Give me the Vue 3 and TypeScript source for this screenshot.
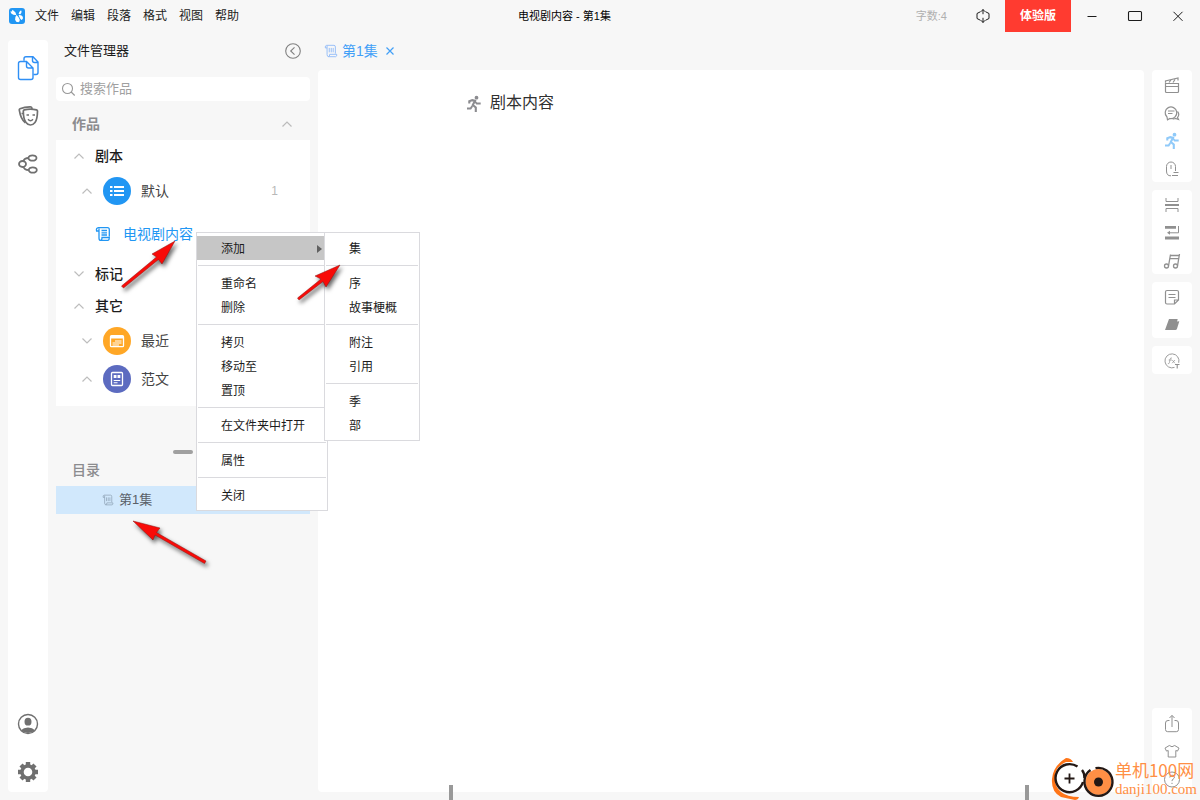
<script setup lang="ts">
import { h, ref } from 'vue'

interface Shape {
  d: string
  fill?: boolean
  w?: number
}

const icons: Record<string, Shape[]> = {
  clapper: [
    { d: 'M7.500 13.500h13v8q0 1-1 1h-11q-1 0-1-1zM7.500 16.500h13', w: 1.2 },
    { d: 'M7.500 12.800V11l12.500-3v2.500M11 12.500l2-2.500M15 12.500l2-3', w: 1.2 },
  ],
  chat: [
    { d: 'M9 19a5.800 5.800 0 1 1 3 1.500l-2.500 1.300z', w: 1.2 },
    { d: 'M10 13h6.500M10 15.500h4.500' },
    { d: 'M19.500 13.500q2.500 3 0 6l1 2-3-1q-1.600.6-3 .2', w: 1.2 },
  ],
  runner: [
    { d: 'M16.500 6.800a1.900 1.900 0 1 1 0 3.800a1.900 1.900 0 0 1 0-3.800z', fill: true },
    { d: 'M9.300 14.500v-2.200l3-1.200 2.700.6-2.200 4.300 3 2.500v4.500', w: 2.1 },
    { d: 'M14.700 12l2 2.500h4', w: 1.800 },
    { d: 'M12.300 17l-1.700 2.500H7', w: 2 },
  ],
  speaker: [
    { d: 'M17.500 17v-4.500a4.500 4.500 0 0 0-9 0V17q0 5 4.500 4.800M13 11v4' },
    { d: 'M15.500 18.500h5M14 21.500h6' },
  ],
  split: [
    { d: 'M8 8v3.500h12V8M8 22v-3.500h12V22' },
    { d: 'M7 14h14v2H7z', fill: true },
  ],
  wrap: [
    { d: 'M7 8h11v2.800H7zM7 18.500h14v3H7zM9 14.800l3-2v4z', fill: true },
    { d: 'M20.500 8v6.800H11' },
  ],
  music: [
    { d: 'M10.500 20a2 2 0 1 1-4 0a2 2 0 0 1 4 0zM19.500 20a2 2 0 1 1-4 0a2 2 0 0 1 4 0z', w: 1.3 },
    { d: 'M10.500 20l2-11.500M19.500 20l2-12M12.500 9.500h8.500M12 12.700h8.700', w: 1.3 },
  ],
  note: [
    { d: 'M9 8.500h10q1.500 0 1.500 1.500v8l-4 4H9q-1.500 0-1.500-1.500V10q0-1.500 1.500-1.500zM20.500 18h-4v4', w: 1.2 },
    { d: 'M10.500 12.500h7M10.500 15.500h7' },
  ],
  eraser: [{ d: 'M11 9h8.700l-.6 2.600 2.200-.4-2.300 7.500q-.4 1.300-1.700 1.300H7z', fill: true }],
  formula: [
    { d: 'M20.700 16.800a7 7 0 1 0-4.200 4.600', w: 0.9 },
    { d: 'M14 12q-1.700-.5-2 1.400l-.6 3.400q-.3 1.200-1.500.8M10.700 14h3.200M14.300 14l2.500 3.200M17 14l-2.900 3.200', w: 0.7 },
    { d: 'M17 18.500h4.500M19.200 18.500v4', w: 1.1 },
  ],
  share: [{ d: 'M11.500 12.500H10q-2.500 0-2.500 2.500v6.500q0 2.200 2.200 2.200h8.600q2.200 0 2.200-2.200V15q0-2.500-2.500-2.500h-1.500M14 19V7.800M11.500 10L14 7.300l2.500 2.700' }],
  shirt: [{ d: 'M11.300 9.500q2.700 2.500 5.400 0l4.300 2.600-1.500 3-1.700-.6v6.500h-7.600v-6.500l-1.700.6-1.500-3z' }],
  help: [
    { d: 'M21.500 15.500a7.500 7.500 0 1 1-15 0a7.500 7.500 0 0 1 15 0z' },
    { d: 'M11.800 13.500q0-2.300 2.300-2.300t2.300 2q0 1-1.200 1.800t-1.200 2.100M14 18.800v1.200' },
  ],
  files: [
    { d: 'M25.500 26.500h2.500q2 0 2-2V14l-5-5.200h-7q-2 0-2 2v2M24.500 9v3.500q0 2 2 2H30', w: 1.4 },
    { d: 'M18.500 13.500h-6q-2 0-2 2v14q0 2 2 2h10.500q2 0 2-2v-9.500zM18.500 13.500v4.500q0 2 2 2H25', w: 1.4 },
  ],
  masks: [
    { d: 'M15.300 15q0-1 1-1.200 6-1.300 12.200 0 1 .2 1 1.200-.1 8.500-2.500 11.500-2 2.500-4.600 2.500T18 26.500q-2.700-3.500-2.700-11.500z', w: 1.7 },
    { d: 'M24 13q0-2.300-2-2.200-5.500.2-10 2-1 .4-.7 1.400 1.500 9.300 6 12.600', w: 1.7 },
    { d: 'M18.500 19h2.500M24.500 19H27M20 23.300q2.500 2.800 5 0M13.500 17.500h2', w: 1.4 },
  ],
  nodes: [
    { d: 'M18 20a3.500 3 0 1 1-7 0a3.500 3 0 0 1 7 0zM28.500 14a4 2.700 0 1 1-8 0a4 2.700 0 0 1 8 0zM28.800 26a4 2.700 0 1 1-8 0a4 2.700 0 0 1 8 0z', w: 1.8 },
    { d: 'M15.500 17q1-3 5-3M15.500 23q1 3 5 3', w: 1.8 },
  ],
  user: [
    { d: 'M29.500 20a9.500 9.500 0 1 1-19 0a9.500 9.500 0 0 1 19 0z', w: 1.4 },
    { d: 'M20 13.800a3.500 3.900 0 1 1 0 7.800a3.500 3.900 0 0 1 0-7.800zM13 26.200q2.500-2.700 7-2.700t7 2.700q-3 2.900-7 2.900t-7-2.900z', fill: true },
  ],
  gear: [
    { d: 'M26 20a6 6 0 1 1-12 0a6 6 0 0 1 12 0z', w: 3.4 },
    { d: 'M20 10v3.500M20 26.500V30M10 20h3.500M26.500 20H30M13 13l2.300 2.300M24.700 24.700L27 27M27 13l-2.300 2.300M15.300 24.700L13 27', w: 4.4 },
  ],
  scroll: [
    { d: 'M3.500 4.500H1.500q-.6-2.700 1.500-3h8.500q1.500 0 1.500 2v7.500M3.500 2v10q0 2.500 2 2.500h8q1.500-.5 1-2.700H6.500q0 2.700-1.500 2.700' },
    { d: 'M6 4.500v5M8.300 4.500v5M10.500 4.500v5' },
  ],
  scrollText: [
    { d: 'M4 5H1.600q-.8-3 1.900-3.400h9q1.800 0 1.800 2v7M4 2.500v9.700q0 2.200 2 2.200h7q1.500-.5 1.300-2.900H7q0 2.900-1.500 2.900', w: 1.3 },
    { d: 'M6.500 4.500H12M6.500 6.800H12M6.500 9H12', w: 1.3 },
  ],
  up: [{ d: 'M3.500 10.500L8 6l4.500 4.500', w: 1.2 }],
  down: [{ d: 'M3.500 5.500L8 10l4.500-4.500', w: 1.2 }],
  collapse: [{ d: 'M15.300 8a7.300 7.300 0 1 1-14.600 0a7.300 7.300 0 0 1 14.600 0zM9.500 4.300L5.700 8l3.800 3.700', w: 1.1 }],
  search: [{ d: 'M12.500 7.500a5 5 0 1 1-10 0a5 5 0 0 1 10 0zM11.200 11l3.500 3.500', w: 1.1 }],
  cross: [{ d: 'M4.500 4.500l7 7M11.500 4.500l-7 7', w: 1.2 }],
  fit: [{ d: 'M5.500 3.700L2 5.500v5L5.500 12.300M10.500 3.700L14 5.500v5l-3.500 1.800M8 1.500v4.700M6 3.700L8 1.500l2 2.200M8 9.800v4.700M6 12.300l2 2.200 2-2.200' }],
  minimize: [{ d: 'M3.500 8.500h9' }],
  maximize: [{ d: 'M2.500 3.500h11q1 0 1 1v7q0 1-1 1h-11q-1 0-1-1v-7q0-1 1-1z', w: 1.1 }],
  close: [{ d: 'M3.500 3.800l9 9M12.500 3.800l-9 9' }],
  list: [
    { d: 'M7 9h2.500v2H7zM7 13h2.500v2H7zM7 17h2.500v2H7zM11 9h10v2H11zM11 13h10v2H11zM11 17h10v2H11z', fill: true },
  ],
  calendar: [
    { d: 'M8.500 8.700h11q1 0 1 1v9q0 1-1 1h-11q-1 0-1-1v-9q0-1 1-1z', w: 1.3 },
    { d: 'M7.500 9h13v2.500h-13z', fill: true },
    { d: 'M12 14h6.500M9.500 16h9M9.500 18h6.500', w: 1.2 },
  ],
  sample: [
    { d: 'M9.500 7.500h9q1 0 1 1v11q0 1-1 1h-9q-1 0-1-1v-11q0-1 1-1z', w: 1.3 },
    { d: 'M10.700 10h2.800v3h-2.800zM14.500 10h2.800v3h-2.800z', fill: true },
    { d: 'M10.700 15.500h6.500M10.700 17.700h3.800', w: 1.1 },
  ],
}

const Icon = (props: { name: string; box: number }) =>
  h(
    'svg',
    { viewBox: `0 0 ${props.box} ${props.box}`, 'aria-hidden': 'true' },
    icons[props.name].map((s) =>
      h('path', {
        d: s.d,
        fill: s.fill ? 'currentColor' : 'none',
        stroke: s.fill ? 'none' : 'currentColor',
        'stroke-width': s.w ?? 1,
      }),
    ),
  )
Icon.props = ['name', 'box']

const menus = ['文件', '编辑', '段落', '格式', '视图', '帮助']
const railTop = [
  { icon: 'files', label: '文件管理器', active: true },
  { icon: 'masks', label: '角色', active: false },
  { icon: 'nodes', label: '大纲', active: false },
]
const railBottom = [
  { icon: 'user', label: '账户' },
  { icon: 'gear', label: '设置' },
]
const toolGroups = [
  ['clapper', 'chat', 'runner', 'speaker'],
  ['split', 'wrap', 'music'],
  ['note', 'eraser'],
  ['formula'],
]
const footTools = ['share', 'shirt', 'help']
const contextMenu = [['添加'], ['重命名', '删除'], ['拷贝', '移动至', '置顶'], ['在文件夹中打开'], ['属性'], ['关闭']]
const subMenu = [['集'], ['序', '故事梗概'], ['附注', '引用'], ['季', '部']]
const query = ref('')
</script>

<template>
  <div class="app">
    <header class="titlebar">
      <svg class="logo" viewBox="0 0 16 16" aria-hidden="true">
        <rect width="16" height="16" rx="3" fill="#2196f3" />
        <path d="M7.300 7Q4.500 7.300 2 5.200L1.500 3.200 3 3.500 3.200 1.800 4.700 2.800Q7 4 7.300 7z" fill="#fff" />
        <path d="M12 2.200q1.500 2-1 4.300l-1.400-.7q.5-2.200 2.400-3.600zM7.500 7q-2 2.500-1.400 4.700.7 2.500 3.200 2.500 2-.3 1.400-2.700-.6-2.300-3.200-4.500zM9.600 7q3-.5 4.200 1.700.8 2-1 3.300-1.700-.4-3.200-5z" fill="#fff" />
      </svg>
      <nav class="menus">
        <button v-for="m in menus" :key="m" type="button">{{ m }}</button>
      </nav>
      <h1 class="title">电视剧内容 - 第1集</h1>
      <span class="count">字数:4</span>
      <button class="fit" type="button" aria-label="适应高度"><Icon name="fit" :box="16" class="i16" /></button>
      <button class="trial" type="button">体验版</button>
      <button class="win" type="button" aria-label="最小化"><Icon name="minimize" :box="16" class="i16" /></button>
      <button class="win" type="button" aria-label="最大化"><Icon name="maximize" :box="16" class="i16" /></button>
      <button class="win" type="button" aria-label="关闭窗口"><Icon name="close" :box="16" class="i16" /></button>
    </header>

    <div class="workspace">
      <nav class="rail">
        <button v-for="r in railTop" :key="r.icon" type="button" :class="{ active: r.active }" :aria-label="r.label">
          <Icon :name="r.icon" :box="40" class="i40" />
        </button>
        <span class="spacer"></span>
        <button v-for="r in railBottom" :key="r.icon" type="button" :aria-label="r.label">
          <Icon :name="r.icon" :box="40" class="i40" />
        </button>
      </nav>

      <aside class="sidebar">
        <div class="side-head">
          <h2>文件管理器</h2>
          <button type="button" aria-label="收起"><Icon name="collapse" :box="16" class="i16" /></button>
        </div>
        <label class="search">
          <Icon name="search" :box="16" class="i16" />
          <input v-model="query" type="text" placeholder="搜索作品" aria-label="搜索作品" />
        </label>
        <div class="works-head">
          <h3>作品</h3>
          <button type="button" aria-label="折叠作品"><Icon name="up" :box="16" class="i16" /></button>
        </div>
        <div class="tree">
          <button class="section" type="button"><Icon name="up" :box="16" class="i16 chev" />剧本</button>
          <button class="folder" type="button">
            <Icon name="up" :box="16" class="i16 chev" />
            <span class="disc blue"><Icon name="list" :box="28" class="i28" /></span>默认
            <span class="num">1</span>
          </button>
          <button class="script" type="button"><Icon name="scrollText" :box="16" class="i16" />电视剧内容</button>
          <button class="section" type="button"><Icon name="down" :box="16" class="i16 chev" />标记</button>
          <button class="section" type="button"><Icon name="up" :box="16" class="i16 chev" />其它</button>
          <button class="folder" type="button">
            <Icon name="down" :box="16" class="i16 chev" />
            <span class="disc orange"><Icon name="calendar" :box="28" class="i28" /></span>最近
          </button>
          <button class="folder" type="button">
            <Icon name="up" :box="16" class="i16 chev" />
            <span class="disc indigo"><Icon name="sample" :box="28" class="i28" /></span>范文
          </button>
        </div>
        <div class="splitter"><span></span></div>
        <h3 class="toc-head">目录</h3>
        <button class="toc-item" type="button"><Icon name="scroll" :box="16" class="i12" />第1集</button>
      </aside>

      <main class="main">
        <div class="tabs">
          <button class="tab" type="button"><Icon name="scroll" :box="16" class="i14" />第1集</button>
          <button class="tab-close" type="button" aria-label="关闭标签"><Icon name="cross" :box="16" class="i16" /></button>
        </div>
        <section class="page">
          <p class="line"><Icon name="runner" :box="28" class="i28 run" />剧本内容</p>
          <span class="tick start"></span>
          <span class="tick end"></span>
        </section>
      </main>

      <div class="tools">
        <div v-for="(g, i) in toolGroups" :key="i" class="group">
          <button v-for="t in g" :key="t" type="button" :class="{ on: t === 'runner' }" :aria-label="t">
            <Icon :name="t" :box="28" class="i28" />
          </button>
        </div>
        <span class="spacer"></span>
        <div class="group">
          <button v-for="t in footTools" :key="t" type="button" :aria-label="t">
            <Icon :name="t" :box="28" class="i28" />
          </button>
        </div>
      </div>
    </div>

    <div class="menu context" role="menu">
      <div v-for="(g, i) in contextMenu" :key="i" class="menu-group">
        <button v-for="m in g" :key="m" type="button" role="menuitem" :class="{ hover: m === '添加' }">
          {{ m }}
        </button>
      </div>
    </div>
    <div class="menu sub" role="menu">
      <div v-for="(g, i) in subMenu" :key="i" class="menu-group">
        <button v-for="m in g" :key="m" type="button" role="menuitem">{{ m }}</button>
      </div>
    </div>

    <svg class="arrows" viewBox="0 0 440 600" aria-hidden="true">
      <path d="M175 241L162 264 158.500 259.500 123.500 288 121.500 286 156.500 257 152 254z" />
      <path d="M340 265L326 287 323 281.500 299 300 297.500 298 321 279 315 276z" />
      <path d="M133 521L160 528 156.500 532.500 206 561 204.500 563.500 155 535 153 540z" />
    </svg>

    <div class="brand">
      <svg viewBox="0 0 64 42" aria-hidden="true">
        <circle cx="18.500" cy="20.500" r="15" fill="#fff" />
        <path d="M22 4Q20 0 15 0 2 8 1 21t9 18l14 3q3 0 4-3Q16 39 10 34 3 28 4 18T15 4z" fill="#ff7518" />
        <path d="M26.500 8.600A14 14 0 1 0 32 24" fill="none" stroke="#231815" stroke-width="2.400" />
        <path d="M31 12q2.500 3 2.500 8" fill="none" stroke="#231815" stroke-width="2.400" />
        <circle cx="47.500" cy="24" r="13" fill="#ff8f45" />
        <path d="M44.500 10.200A14 14 0 1 1 33.500 23q0-7 6-11" fill="none" stroke="#231815" stroke-width="2.400" />
        <circle cx="47.500" cy="24" r="4.500" fill="#231815" />
        <path d="M13.500 20.500h10M18.500 15.500v10" stroke="#231815" stroke-width="1.800" />
      </svg>
      <p><span class="brand-name">单机100网</span><span class="brand-site">danji100.com</span></p>
    </div>
  </div>
</template>

<style>
body {
  margin: 0;
  background: #f7f7f7;
}
</style>

<style scoped>
.app {
  position: relative;
  display: flex;
  flex-direction: column;
  height: 100vh;
  overflow: hidden;
  background: #f7f7f7;
  color: #1c1c1c;
  font-family: "Liberation Sans", "Noto Sans CJK SC", sans-serif;
  font-size: 12px;
  line-height: 20px;
}
button {
  margin: 0;
  padding: 0;
  border: 0;
  background: none;
  color: inherit;
  font: inherit;
  text-align: left;
}
h1,
h2,
h3,
p {
  margin: 0;
  font-weight: 400;
}
svg {
  display: block;
  flex: none;
}
.i12 { width: 12px; height: 12px; }
.i14 { width: 14px; height: 14px; }
.i16 { width: 16px; height: 16px; }
.i28 { width: 28px; height: 28px; }
.i40 { width: 40px; height: 40px; }
.spacer {
  flex: 1;
}
.titlebar {
  display: flex;
  align-items: center;
  height: 32px;
  flex: none;
  padding-left: 9px;
}
.logo {
  width: 16px;
  height: 16px;
}
.menus {
  display: flex;
  gap: 12px;
  margin-left: 10px;
}
.title {
  flex: 1;
  padding-right: 26px;
  text-align: center;
  font-size: 11px;
  color: #000;
}
.count {
  margin-right: 15px;
  font-size: 11px;
  color: #b0b0b0;
}
.fit,
.win {
  display: flex;
  align-items: center;
  justify-content: center;
  width: 43px;
  height: 32px;
  padding-right: 1px;
}
.trial {
  width: 66px;
  height: 32px;
  background: #ff3b30;
  color: #fff;
  font-weight: 700;
  text-align: center;
}
.workspace {
  display: flex;
  flex: 1;
  min-height: 0;
  gap: 8px;
  padding: 0 8px 8px;
}
.rail {
  display: flex;
  flex-direction: column;
  gap: 8px;
  width: 40px;
  flex: none;
  margin-top: 8px;
  padding-top: 8px;
  box-sizing: border-box;
  border-radius: 4px;
  background: #fff;
  color: #707070;
}
.rail .active {
  color: #2f8ff5;
}
.sidebar {
  display: flex;
  flex-direction: column;
  width: 254px;
  flex: none;
}
.side-head {
  display: flex;
  align-items: center;
  justify-content: space-between;
  height: 38px;
  padding: 0 9px 0 8px;
}
.side-head h2 {
  font-size: 13px;
}
.side-head button {
  color: #808080;
}
.search {
  display: flex;
  align-items: center;
  gap: 4px;
  height: 24px;
  margin-top: 7px;
  padding-left: 4px;
  border-radius: 4px;
  background: #fff;
  color: #999;
}
.search input {
  flex: 1;
  min-width: 0;
  height: 20px;
  padding: 0;
  border: 0;
  outline: 0;
  background: none;
  font: inherit;
  font-size: 13px;
}
.search input::placeholder {
  color: #a0a0a0;
}
.works-head {
  display: flex;
  align-items: center;
  justify-content: space-between;
  height: 32px;
  margin-top: 7px;
  padding: 0 15px 0 16px;
  color: #bbb;
}
.works-head h3,
.toc-head {
  font-size: 14px;
  font-weight: 500;
  color: #8c8c8f;
}
.works-head h3 {
  font-weight: 700;
}
.tree {
  display: flex;
  flex-direction: column;
  padding-bottom: 8px;
  background: #fff;
}
.tree button {
  display: flex;
  align-items: center;
  font-size: 14px;
}
.chev {
  color: #bdbdbd;
}
.tree .section {
  height: 32px;
  gap: 8px;
  padding-left: 15px;
  font-weight: 500;
}
.tree .folder {
  height: 38px;
  padding-left: 23px;
  color: #444;
}
.disc {
  margin: 0 10px 0 8px;
  border-radius: 50%;
  color: #fff;
}
.blue { background: #2196f3; }
.orange { background: #ffa726; }
.indigo { background: #5c6bc0; }
.num {
  margin-left: auto;
  padding-right: 32px;
  font-size: 12px;
  color: #b8b8b8;
}
.tree .script {
  height: 48px;
  gap: 12px;
  padding-left: 39px;
  color: #2196f3;
}
.splitter {
  display: flex;
  justify-content: center;
  padding: 44px 0 4px;
}
.splitter span {
  width: 20px;
  height: 4px;
  border-radius: 2px;
  background: #a0a0a0;
}
.toc-head {
  height: 28px;
  padding-left: 16px;
  line-height: 24px;
}
.toc-item {
  display: flex;
  align-items: center;
  gap: 5px;
  height: 28px;
  padding-left: 46px;
  background: #d1e8fc;
  color: #5a6068;
  font-size: 13px;
}
.toc-item svg {
  color: #8fa3b5;
}
.main {
  display: flex;
  flex: 1;
  flex-direction: column;
  min-width: 0;
}
.tabs {
  display: flex;
  align-items: center;
  height: 38px;
  flex: none;
  padding-left: 6px;
  color: #42a0f7;
}
.tab {
  display: flex;
  align-items: center;
  gap: 4px;
  font-size: 14px;
}
.tab svg {
  color: #8db8f8;
}
.tab-close {
  margin-left: 4px;
}
.page {
  position: relative;
  flex: 1;
  border-radius: 4px;
  background: #fff;
}
.line {
  display: flex;
  align-items: center;
  gap: 2px;
  padding: 19px 0 0 142px;
  font-size: 16px;
  color: #303030;
}
.run {
  color: #8c8c90;
}
.tick {
  position: absolute;
  bottom: -8px;
  width: 4px;
  height: 15px;
  background: #999;
}
.start { left: 131px; }
.end { right: 115px; }
.tools {
  display: flex;
  flex-direction: column;
  gap: 8px;
  width: 40px;
  flex: none;
  margin-top: 38px;
}
.group {
  display: flex;
  flex-direction: column;
  align-items: center;
  border-radius: 4px;
  background: #fff;
  color: #909090;
}
.group .on {
  color: #90caf9;
}
.menu {
  position: absolute;
  top: 232px;
  box-sizing: border-box;
  padding: 3px 0;
  border: 1px solid #dadade;
  background: #fff;
}
.context {
  left: 196px;
  width: 132px;
}
.sub {
  left: 324px;
  width: 96px;
}
.menu-group {
  display: flex;
  flex-direction: column;
}
.menu-group + .menu-group {
  margin: 5px 1px 0;
  padding-top: 5px;
  border-top: 1px solid #dadade;
}
.menu button {
  height: 24px;
  padding: 2px 0 0 24px;
}
.menu-group + .menu-group button {
  padding-left: 23px;
}
.menu .hover {
  display: flex;
  align-items: center;
  justify-content: space-between;
  padding-right: 5px;
  background: #c6c6c6;
}
.hover::after {
  content: "";
  border-left: 5px solid #606060;
  border-top: 4px solid transparent;
  border-bottom: 4px solid transparent;
}
.arrows {
  position: absolute;
  left: 0;
  top: 0;
  width: 440px;
  height: 600px;
  fill: #f80b08;
  stroke: #8c1512;
  stroke-width: 0.5;
  filter: drop-shadow(2px 3px 2px #0009);
  pointer-events: none;
}
.brand {
  position: absolute;
  right: 3px;
  bottom: 0;
  display: flex;
  align-items: center;
  color: #ff8f45;
  pointer-events: none;
}
.brand svg {
  width: 64px;
  height: 42px;
}
.brand p {
  display: flex;
  flex-direction: column;
  white-space: nowrap;
}
.brand-name {
  font-family: "Noto Sans CJK SC", sans-serif;
  font-size: 17px;
  line-height: 20px;
}
.brand-site {
  font-family: "Liberation Serif", serif;
  font-size: 15px;
  line-height: 18px;
}
</style>
